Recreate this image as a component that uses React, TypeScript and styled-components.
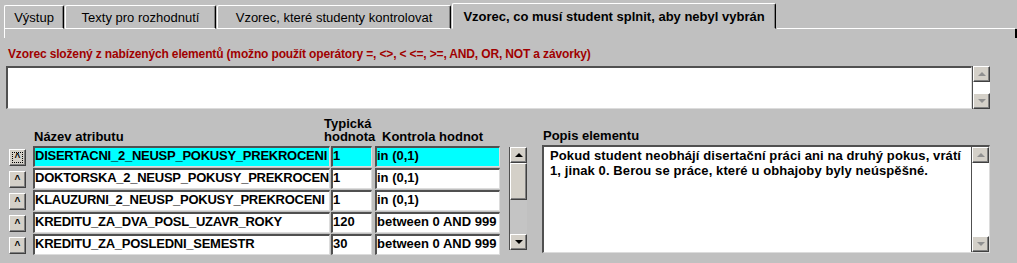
import React from 'react';
import styled, { createGlobalStyle } from 'styled-components';

const GlobalStyle = createGlobalStyle`
  html, body {
    margin: 0;
    padding: 0;
    background: #c0c0c0;
  }
  body {
    font-family: "Liberation Sans", Arial, sans-serif;
    font-size: 13px;
    color: #000;
  }
`;

const Screen = styled.div`
  width: 1017px;
  height: 263px;
  overflow: hidden;
  background: #c0c0c0;
`;

const TabBar = styled.div`
  display: flex;
  align-items: flex-end;
  padding: 3px 0 0 4px;
`;

const Tab = styled.div<{ $active?: boolean; $w: number }>`
  box-sizing: border-box;
  width: ${p => p.$w}px;
  height: ${p => (p.$active ? 26 : 24)}px;
  margin-right: 1px;
  display: flex;
  align-items: center;
  justify-content: center;
  white-space: nowrap;
  font-size: 13px;
  font-weight: ${p => (p.$active ? 700 : 400)};
  border-top: 1px solid #fff;
  border-left: 1px solid #fff;
  border-right: 1px solid #000;
  border-bottom: 1px solid ${p => (p.$active ? '#c0c0c0' : '#fff')};
  border-radius: 2px 2px 0 0;
  box-shadow: inset -1px 0 #808080;
`;

const TabFiller = styled.div`
  flex: 1;
  margin-right: 2px;
  border-bottom: 1px solid #fff;
`;

const PanelEdge = styled.div`
  height: 9px;
  margin-left: 4px;
  border-left: 1px solid #fff;
  border-right: 2px solid #000;
`;

const Hint = styled.div`
  margin: 9px 0 0 8px;
  font-size: 12px;
  line-height: 14px;
  font-weight: 700;
  letter-spacing: -0.15px;
  color: #a00000;
  white-space: nowrap;
`;

const FormulaRow = styled.div`
  display: flex;
  margin: 5px 0 0 6px;
  height: 43px;
`;

const Sunken = styled.div`
  box-sizing: border-box;
  background: #fff;
  border-style: solid;
  border-width: 2px 1px 1px 2px;
  border-color: #505050 #dcdcdc #dcdcdc #505050;
`;

const FormulaText = styled(Sunken)`
  width: 966px;
  height: 100%;
`;

const ScrollBar = styled.div<{ $h: number; $track: string }>`
  box-sizing: border-box;
  display: flex;
  flex-direction: column;
  width: 18px;
  height: ${p => p.$h}px;
  background: ${p => p.$track};
  border-left: 1px solid #505050;
`;

const ScrollButton = styled.div`
  box-sizing: border-box;
  height: 16px;
  flex: none;
  display: flex;
  align-items: center;
  justify-content: center;
  background: #d4d0c8;
  border: 1px solid;
  border-color: #fff #404040 #404040 #fff;
  box-shadow: inset -1px -1px #808080;
`;

const ScrollSpace = styled.div`
  flex: 1;
`;

const Thumb = styled.div<{ $h: number }>`
  box-sizing: border-box;
  height: ${p => p.$h}px;
  flex: none;
  background: #d4d0c8;
  border: 1px solid;
  border-color: #fff #404040 #404040 #fff;
  box-shadow: inset -1px -1px #808080;
`;

const Arrow = styled.span<{ $down?: boolean; $dim?: boolean }>`
  width: 0;
  height: 0;
  border-left: 4px solid transparent;
  border-right: 4px solid transparent;
  ${p =>
    p.$down
      ? `border-top: 4px solid ${p.$dim ? '#909090' : '#000'};`
      : `border-bottom: 4px solid ${p.$dim ? '#909090' : '#000'};`}
`;

const Lower = styled.div`
  display: flex;
  align-items: flex-start;
  padding-left: 9px;
`;

const AttrTable = styled.div`
  display: flex;
  flex-direction: column;
  gap: 1px;
`;

const GridRow = styled.div`
  display: grid;
  grid-template-columns: 24px 298px 44px 125px;
`;

const HeaderRow = styled(GridRow)`
  box-sizing: border-box;
  height: 36px;
  padding-bottom: 2px;
  align-items: end;
`;

const HeaderCell = styled.div<{ $offset?: number }>`
  margin-left: ${p => p.$offset ?? 0}px;
  font-weight: 700;
  font-size: 13px;
  line-height: 13px;
  white-space: nowrap;
`;

const DataRow = styled(GridRow)`
  height: 21px;
`;

const RowButton = styled.button<{ $focused?: boolean }>`
  box-sizing: border-box;
  align-self: end;
  margin-bottom: 1px;
  width: 17px;
  height: 17px;
  padding: 0;
  display: flex;
  align-items: center;
  justify-content: center;
  background: #d4d0c8;
  border: 1px solid;
  border-color: #fff #404040 #404040 #fff;
  box-shadow: inset -1px -1px #808080;
  font-family: "Liberation Sans", Arial, sans-serif;
  font-size: 10px;
  font-weight: 700;
  line-height: 10px;
  color: #000;
  outline: ${p => (p.$focused ? '1px dotted #000' : 'none')};
  outline-offset: -4px;
`;

const Field = styled(Sunken)<{ $w: number; $selected?: boolean; $tight?: boolean }>`
  width: ${p => p.$w}px;
  height: 21px;
  background: ${p => (p.$selected ? '#00ffff' : '#fff')};
  font-size: 13px;
  font-weight: 700;
  line-height: 15px;
  letter-spacing: ${p => (p.$tight ? '-0.25px' : '0')};
  white-space: nowrap;
  overflow: hidden;
`;

const ListScroll = styled.div`
  margin: 38px 0 0 9px;
`;

const DescColumn = styled.div`
  margin-left: 15px;
  width: 448px;
`;

const DescLabel = styled.div`
  box-sizing: border-box;
  height: 36px;
  padding: 0 0 3px 1px;
  display: flex;
  align-items: flex-end;
  font-weight: 700;
  font-size: 13px;
  line-height: 13px;
`;

const DescBox = styled(Sunken)`
  display: flex;
  height: 108px;
`;

const DescText = styled.div`
  flex: 1;
  padding: 1px 6px 0;
  font-size: 13px;
  font-weight: 700;
  line-height: 15px;
  letter-spacing: 0.1px;
  white-space: nowrap;
`;

const rows = [
  { name: 'DISERTACNI_2_NEUSP_POKUSY_PREKROCENI', value: '1', check: 'in (0,1)' },
  { name: 'DOKTORSKA_2_NEUSP_POKUSY_PREKROCENI', value: '1', check: 'in (0,1)' },
  { name: 'KLAUZURNI_2_NEUSP_POKUSY_PREKROCENI', value: '1', check: 'in (0,1)' },
  { name: 'KREDITU_ZA_DVA_POSL_UZAVR_ROKY', value: '120', check: 'between 0 AND 999' },
  { name: 'KREDITU_ZA_POSLEDNI_SEMESTR', value: '30', check: 'between 0 AND 999' },
];

const tabs = [
  { label: 'Výstup', w: 60 },
  { label: 'Texty pro rozhodnutí', w: 151 },
  { label: 'Vzorec, které studenty kontrolovat', w: 234 },
  { label: 'Vzorec, co musí student splnit, aby nebyl vybrán', w: 324, active: true },
];

export default function App() {
  return (
    <Screen>
      <GlobalStyle />
      <TabBar>
        {tabs.map(t => (
          <Tab key={t.label} $w={t.w} $active={t.active}>
            {t.label}
          </Tab>
        ))}
        <TabFiller />
      </TabBar>
      <PanelEdge />

      <Hint>
        Vzorec složený z nabízených elementů (možno použít operátory =, &lt;&gt;, &lt; &lt;=, &gt;=, AND, OR, NOT a
        závorky)
      </Hint>

      <FormulaRow>
        <FormulaText />
        <ScrollBar $h={43} $track="#fff">
          <ScrollButton>
            <Arrow $dim />
          </ScrollButton>
          <ScrollSpace />
          <ScrollButton>
            <Arrow $down $dim />
          </ScrollButton>
        </ScrollBar>
      </FormulaRow>

      <Lower>
        <AttrTable>
          <HeaderRow>
            <span />
            <HeaderCell $offset={1}>Název atributu</HeaderCell>
            <HeaderCell $offset={-7}>
              Typická
              <br />
              hodnota
            </HeaderCell>
            <HeaderCell $offset={7}>Kontrola hodnot</HeaderCell>
          </HeaderRow>
          {rows.map((r, i) => (
            <DataRow key={r.name}>
              <RowButton $focused={i === 0}>^</RowButton>
              <Field $w={297} $selected={i === 0} $tight>
                {r.name}
              </Field>
              <Field $w={41} $selected={i === 0}>
                {r.value}
              </Field>
              <Field $w={125} $selected={i === 0}>
                {r.check}
              </Field>
            </DataRow>
          ))}
        </AttrTable>

        <ListScroll>
          <ScrollBar $h={103} $track="#c4c4c4">
            <ScrollButton>
              <Arrow />
            </ScrollButton>
            <Thumb $h={37} />
            <ScrollSpace />
            <ScrollButton>
              <Arrow $down />
            </ScrollButton>
          </ScrollBar>
        </ListScroll>

        <DescColumn>
          <DescLabel>Popis elementu</DescLabel>
          <DescBox>
            <DescText>
              Pokud student neobhájí disertační práci ani na druhý pokus, vrátí
              <br />
              1, jinak 0. Berou se práce, které u obhajoby byly neúspěšné.
            </DescText>
            <ScrollBar $h={105} $track="#fff">
              <ScrollButton>
                <Arrow $dim />
              </ScrollButton>
              <ScrollSpace />
              <ScrollButton>
                <Arrow $down $dim />
              </ScrollButton>
            </ScrollBar>
          </DescBox>
        </DescColumn>
      </Lower>
    </Screen>
  );
}
